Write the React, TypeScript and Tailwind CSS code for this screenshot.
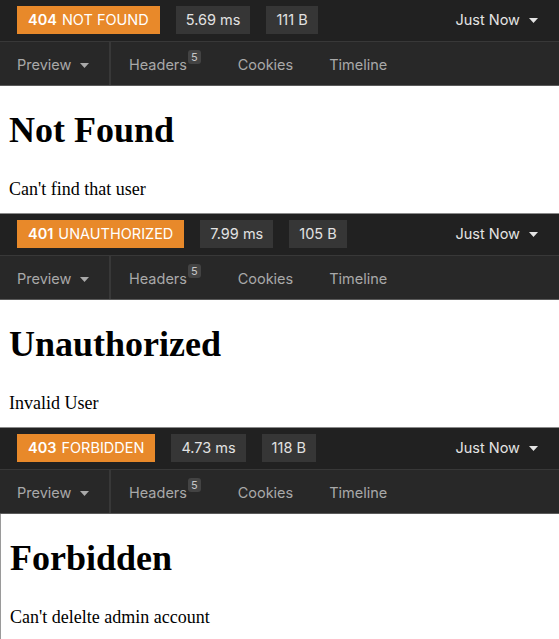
import React from "react";

const Caret = ({ className = "" }: { className?: string }) => (
  <svg width="9" height="5" viewBox="0 0 9 5" className={className}>
    <path d="M0 0 L9 0 L4.5 5 Z" fill="currentColor" />
  </svg>
);

type PanelProps = {
  code: string;
  label: string;
  time: string;
  size: string;
  title: string;
  message: string;
  leftBorder?: boolean;
  bottomBorder?: boolean;
};

const Panel = ({ code, label, time, size, title, message, leftBorder, bottomBorder }: PanelProps) => (
  <div className="flex flex-col" style={{ fontFamily: "Inter, 'Liberation Sans', sans-serif" }}>
    <div className="h-[42px] bg-[#212121] border-b border-[#383838] flex items-center pl-[17px] pr-[21px] pb-px">
      <div className="h-[28px] bg-[#e8892a] text-white text-[14.5px] flex items-center px-[11px] gap-[5px]">
        <span className="font-semibold">{code}</span>
        <span>{label}</span>
      </div>
      <div className="ml-[16px] h-[28px] bg-[#363636] text-[#e2e2e2] text-[14.5px] flex items-center px-[10px]">
        {time}
      </div>
      <div className="ml-[16px] h-[28px] bg-[#363636] text-[#e2e2e2] text-[14.5px] flex items-center px-[10px]">
        {size}
      </div>
      <div className="ml-auto flex items-center gap-[9px] text-[#e4e4e4] text-[14.5px]">
        <span>Just Now</span>
        <Caret />
      </div>
    </div>
    <div className="h-[44px] bg-[#282828] border-b border-[#5a5a5a] flex items-stretch text-[14.5px] text-[#a9a9a9] pt-[3px]">
      <div className="w-[111px] border-r-2 border-[#383838] flex items-center pl-[17px] gap-[9px] -mt-[3px] pt-[3px]">
        <span>Preview</span>
        <Caret className="mt-px" />
      </div>
      <div className="flex items-center pl-[18px]">
        <span>Headers</span>
        <span className="relative -top-[8px] ml-px h-[14px] px-[3px] rounded-[3px] bg-[#434343] text-[#c8c8c8] text-[11px] leading-[14px]">5</span>
      </div>
      <div className="flex items-center pl-[37px]">Cookies</div>
      <div className="flex items-center pl-[36px]">Timeline</div>
    </div>
    <div
      className={`h-[128px] bg-white px-[9px] overflow-hidden text-black ${leftBorder ? "border-l border-[#9a9a9a]" : ""} ${bottomBorder ? "border-b border-[#8a8a8a]" : ""}`}
      style={{ fontFamily: "'Liberation Serif', 'Times New Roman', serif" }}
    >
      <h1 className="text-[36px] font-bold leading-[41px] mt-[24px]">{title}</h1>
      <p className="text-[18px] leading-[21px] mt-[28px]">{message}</p>
    </div>
  </div>
);

export default function App() {
  return (
    <div className="w-[559px] h-[639px] overflow-hidden bg-white">
      <Panel code="404" label="NOT FOUND" time="5.69 ms" size="111 B" title="Not Found" message="Can't find that user" bottomBorder />
      <Panel code="401" label="UNAUTHORIZED" time="7.99 ms" size="105 B" title="Unauthorized" message="Invalid User" bottomBorder />
      <Panel code="403" label="FORBIDDEN" time="4.73 ms" size="118 B" title="Forbidden" message="Can't delelte admin account" leftBorder />
    </div>
  );
}
